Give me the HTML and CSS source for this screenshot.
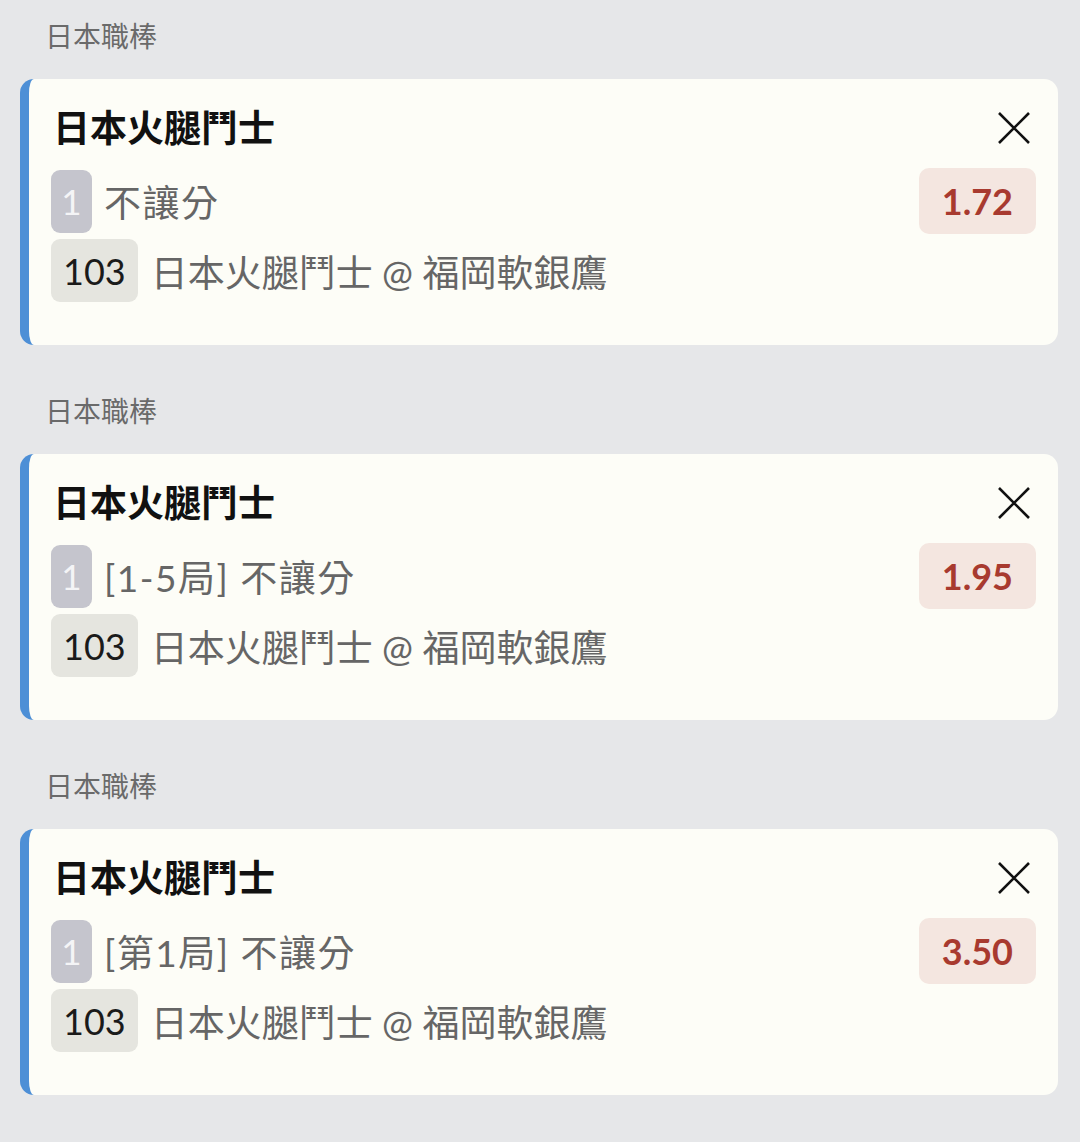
FILE: index.html
```html
<!DOCTYPE html>
<html lang="zh-Hant">
<head>
<meta charset="utf-8">
<link rel="stylesheet" href="styles.css">
</head>
<body>
<div class="page">
  <section class="group">
    <div class="league">日本職棒</div>
    <div class="card">
      <div class="head">
        <div class="title">日本火腿鬥士</div>
        <svg class="close" viewBox="0 0 36 36" width="36" height="36"><path d="M3 3L33 33M33 3L3 33" stroke="#111" stroke-width="2.6" fill="none"/></svg>
      </div>
      <div class="row1">
        <div class="left"><span class="pick">1</span><span class="market">不讓分</span></div>
        <div class="odds">1.72</div>
      </div>
      <div class="row2"><span class="num">103</span><span class="teams">日本火腿鬥士 @ 福岡軟銀鷹</span></div>
    </div>
  </section>
  <section class="group">
    <div class="league">日本職棒</div>
    <div class="card">
      <div class="head">
        <div class="title">日本火腿鬥士</div>
        <svg class="close" viewBox="0 0 36 36" width="36" height="36"><path d="M3 3L33 33M33 3L3 33" stroke="#111" stroke-width="2.6" fill="none"/></svg>
      </div>
      <div class="row1">
        <div class="left"><span class="pick">1</span><span class="market">[1-5局] 不讓分</span></div>
        <div class="odds">1.95</div>
      </div>
      <div class="row2"><span class="num">103</span><span class="teams">日本火腿鬥士 @ 福岡軟銀鷹</span></div>
    </div>
  </section>
  <section class="group">
    <div class="league">日本職棒</div>
    <div class="card">
      <div class="head">
        <div class="title">日本火腿鬥士</div>
        <svg class="close" viewBox="0 0 36 36" width="36" height="36"><path d="M3 3L33 33M33 3L3 33" stroke="#111" stroke-width="2.6" fill="none"/></svg>
      </div>
      <div class="row1">
        <div class="left"><span class="pick">1</span><span class="market">[第1局] 不讓分</span></div>
        <div class="odds">3.50</div>
      </div>
      <div class="row2"><span class="num">103</span><span class="teams">日本火腿鬥士 @ 福岡軟銀鷹</span></div>
    </div>
  </section>
</div>
</body>
</html>
```
FILE: styles.css
```css
html, body {
  margin: 0;
  padding: 0;
  background: #e6e7e9;
}
body {
  font-family: "Lato", "Noto Sans CJK TC", sans-serif;
  width: 1080px;
  height: 1142px;
  overflow: hidden;
}
.page {
  display: flex;
  flex-direction: column;
  gap: 46px;
  padding-top: 16px;
}
.league {
  font-size: 28px;
  line-height: 40px;
  color: #6a6a6a;
  padding-left: 45px;
  margin-bottom: 23px;
}
.card {
  margin: 0 22px 0 20px;
  background: #fdfdf7;
  border-left: 9px solid #4d8fd6;
  border-radius: 14px;
  padding: 24px 22px 43px 22px;
  display: flex;
  flex-direction: column;
}
.head {
  height: 50px;
  display: flex;
  align-items: center;
  justify-content: space-between;
  padding-right: 4px;
}
.title {
  font-size: 37px;
  font-weight: 700;
  color: #111;
  padding-left: 2px;
  margin-top: -4px;
}
.close {
  display: block;
}
.row1 {
  margin-top: 15px;
  display: flex;
  align-items: center;
  justify-content: space-between;
}
.left, .row2 {
  display: flex;
  align-items: center;
}
.pick {
  width: 41px;
  height: 63px;
  border-radius: 9px;
  background: #c5c5cd;
  color: #f4f4f6;
  font-size: 35px;
  display: flex;
  align-items: center;
  justify-content: center;
}
.market {
  font-size: 37px;
  letter-spacing: 1.5px;
  color: #666;
  margin-left: 12px;
}
.teams {
  font-size: 37px;
  color: #666;
  margin-left: 13px;
}
.odds {
  height: 66px;
  padding: 0 23px;
  border-radius: 10px;
  background: #f4e6e0;
  color: #a83a2f;
  font-size: 36px;
  font-weight: 700;
  display: flex;
  align-items: center;
}
.row2 {
  margin-top: 5px;
}
.num {
  height: 63px;
  padding: 0 12px;
  border-radius: 9px;
  background: #e5e5df;
  color: #1a1a1a;
  font-size: 36px;
  display: flex;
  align-items: center;
}
```
